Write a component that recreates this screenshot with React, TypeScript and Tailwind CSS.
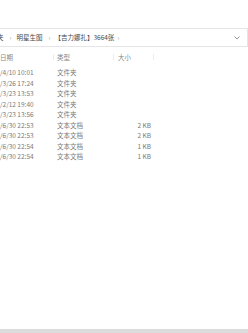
const rows = [
  { date: "/4/10 10:01", type: "文件夹", size: "" },
  { date: "/3/26 17:24", type: "文件夹", size: "" },
  { date: "/3/23 13:53", type: "文件夹", size: "" },
  { date: "/2/12 19:40", type: "文件夹", size: "" },
  { date: "/3/23 13:56", type: "文件夹", size: "" },
  { date: "/6/30 22:53", type: "文本文档", size: "2 KB" },
  { date: "/6/30 22:53", type: "文本文档", size: "2 KB" },
  { date: "/6/30 22:54", type: "文本文档", size: "1 KB" },
  { date: "/6/30 22:54", type: "文本文档", size: "1 KB" },
];

const font = { fontFamily: '"Noto Sans CJK SC", "Noto Sans", sans-serif' };

export default function App() {
  return (
    <div className="flex h-[333px] w-[248px] flex-col overflow-hidden bg-white text-[6.5px] leading-none" style={font}>
      <div className="h-[28px] shrink-0" />

      {/* address bar */}
      <div className="flex h-[19px] shrink-0 items-center border-y border-[#e5e5e5] text-[#4a4a4a]">
        <div className="flex flex-1 items-center whitespace-nowrap">
          <span className="-ml-[3px]">夹</span>
          <span className="ml-[6px] text-[#999]">›</span>
          <span className="ml-[5px]">明星生图</span>
          <span className="ml-[6px] text-[#999]">›</span>
          <span className="ml-[4px]">【吉力娜扎】3664张</span>
          <span className="ml-[3px] text-[#999]">›</span>
        </div>
        <svg width="6" height="4" viewBox="0 0 6 4" className="mr-[7px]">
          <path d="M0.5 0.5 L3 3 L5.5 0.5" fill="none" stroke="#777" strokeWidth="0.8" />
        </svg>
        <div className="h-full w-px bg-[#e5e5e5]" />
      </div>

      {/* column header */}
      <div className="mt-[4px] flex h-[12px] shrink-0 items-center text-[#8a8a8a]">
        <div className="w-[54px] border-r border-[#ededed]">日期</div>
        <div className="w-[60px] border-r border-[#ededed] pl-[3px]">类型</div>
        <div className="w-[40px] border-r border-[#ededed] pl-[4px]">大小</div>
      </div>

      {/* rows */}
      <div className="mt-[4px] flex flex-col text-[#7a7a7a]">
        {rows.map((row, i) => (
          <div key={i} className="flex h-[10.5px] items-center whitespace-nowrap">
            <div className="w-[54px]">{row.date}</div>
            <div className="w-[60px] pl-[3px]">{row.type}</div>
            <div className="w-[37px] text-right">{row.size}</div>
          </div>
        ))}
      </div>

      <div className="flex-1" />
      <div className="h-[4px] shrink-0 bg-[#dcdcdc]" />
    </div>
  );
}
